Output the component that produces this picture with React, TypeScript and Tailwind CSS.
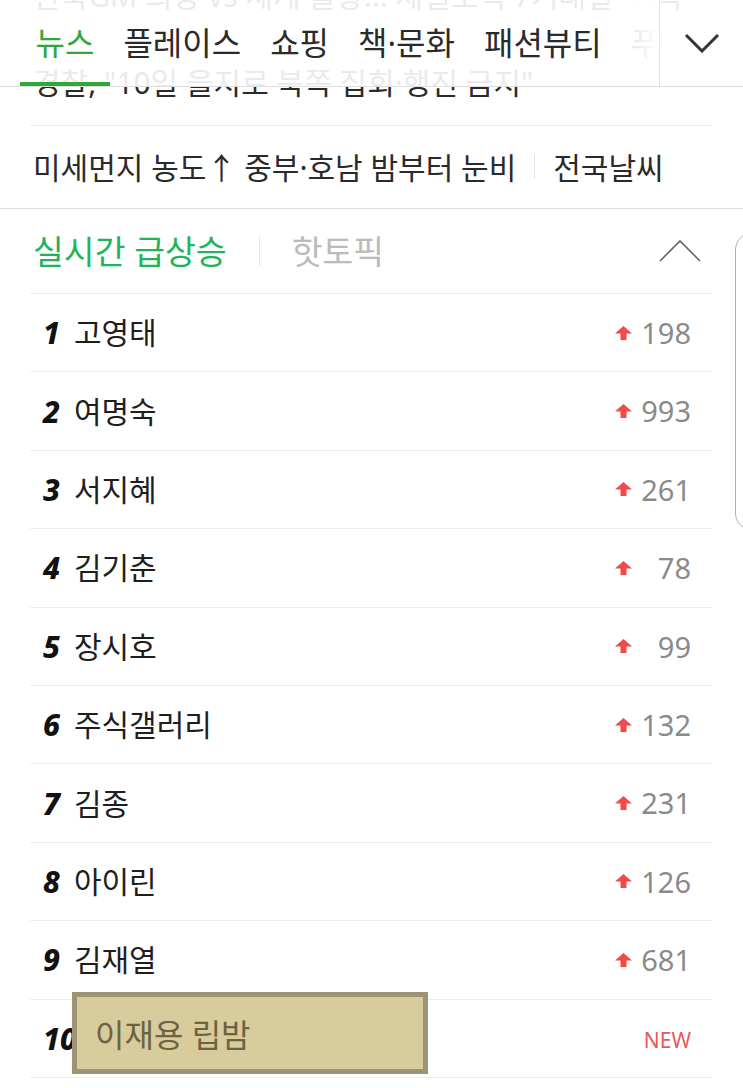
type TRank = {
  rank: number,
  name: string,
  change: string,
  isNew?: boolean
}

const ranks: TRank[] = [
  { rank: 1, name: '고영태', change: '198' },
  { rank: 2, name: '여명숙', change: '993' },
  { rank: 3, name: '서지혜', change: '261' },
  { rank: 4, name: '김기춘', change: '78' },
  { rank: 5, name: '장시호', change: '99' },
  { rank: 6, name: '주식갤러리', change: '132' },
  { rank: 7, name: '김종', change: '231' },
  { rank: 8, name: '아이린', change: '126' },
  { rank: 9, name: '김재열', change: '681' },
  { rank: 10, name: '이재용 립밤', change: '', isNew: true }
]

const tabs = ['뉴스', '플레이스', '쇼핑', '책·문화', '패션뷰티', '푸드']

const UpArrow = () => (
  <svg width="17" height="14" viewBox="0 0 17 14" className="shrink-0">
    <path d="M8.5 0 L17 7.5 H11.5 V14 H5.5 V7.5 H0 Z" fill="#f24a4a" />
  </svg>
)

const RankRow = ({ data }: { data: TRank }) => (
  <li className="h-[78.4px] flex items-center justify-between border-b border-[#eeeeee] pl-[13px] pr-[22px]">
    <div className="flex items-center gap-[14px]">
      <span className="text-[30px] font-extrabold italic text-[#111]">{data.rank}</span>
      <span className="text-[30px] text-[#1e1e1e]">{data.name}</span>
    </div>

    {data.isNew ? (
      <span className="text-[21px] text-[#e55b5b] mt-[5px]">NEW</span>
    ) : (
      <div className="flex items-center gap-[9px]">
        <UpArrow />
        <span className="w-[50px] text-right text-[29px] text-[#8a8a8a]">{data.change}</span>
      </div>
    )}
  </li>
)

const App = () => {
  return (
    <div className="relative w-[743px] h-[1088px] overflow-hidden bg-white font-['Noto_Sans','Noto_Sans_CJK_KR',sans-serif]">
      <section className="-mt-[48px] border-b border-[#dddddd]">
        <ul className="px-[30px] text-[30px] text-[#2a2a2a]">
          <li className="h-[87px] flex items-center border-b border-[#eeeeee] pl-[3px] whitespace-nowrap">
            한국GM 희망 vs 세계 불황... 제일모직 7거래일 '하락'
          </li>
          <li className="h-[87px] flex items-center border-b border-[#eeeeee] pl-[3px] whitespace-nowrap">
            경찰, "10일 을지로 북쪽 집회·행진 금지"
          </li>
          <li className="h-[82px] flex items-center pl-[3px] whitespace-nowrap">
            <span>미세먼지 농도↑ 중부·호남 밤부터 눈비</span>
            <span className="mx-[18px] w-px h-[24px] bg-[#e2e2e2]" />
            <span>전국날씨</span>
          </li>
        </ul>
      </section>

      <section className="px-[30px]">
        <div className="h-[85px] flex items-center justify-between border-b border-[#eeeeee] pl-[3px] pr-[12px]">
          <div className="flex items-center text-[33.5px]">
            <span className="text-[#1fb45a]">실시간 급상승</span>
            <span className="mx-[32px] w-px h-[30px] bg-[#e6e6e6]" />
            <span className="text-[#bbbbbb]">핫토픽</span>
          </div>
          <svg width="42" height="24" viewBox="0 0 42 24" fill="none">
            <polyline points="1,22 21,2 41,22" stroke="#666" strokeWidth="1.6" />
          </svg>
        </div>

        <ul>
          {ranks.map(item => <RankRow key={item.rank} data={item} />)}
        </ul>
      </section>

      <nav className="absolute top-0 left-0 w-full h-[87px] flex bg-white/90 border-b border-[#dddddd]">
        <div className="relative flex-1 overflow-hidden flex items-stretch pl-[21px]">
          {tabs.map((tab, i) => (
            <div
              key={tab}
              className={`relative shrink-0 flex items-center px-[14.5px] text-[32px] ${i === 0 ? 'text-[#2ea83a]' : 'text-[#2a2a2a]'}`}
            >
              {tab}
              {i === 0 && <span className="absolute -left-[1px] -right-[1px] bottom-0 h-[4px] bg-[#2ea83a]" />}
            </div>
          ))}
          <div className="absolute top-0 right-0 h-full w-[50px] bg-linear-to-r from-white/80 to-white" />
        </div>
        <div className="w-[84px] flex items-center justify-center border-l border-[#e4e4e4]">
          <svg width="36" height="20" viewBox="0 0 36 20" fill="none">
            <polyline points="2,2 18,18 34,2" stroke="#333" strokeWidth="3" />
          </svg>
        </div>
      </nav>

      <div className="absolute left-[735px] top-[232px] w-[40px] h-[299px] rounded-[18px] border border-[#b0b0b0]" />

      <div className="absolute left-[72px] top-[992px] w-[356px] h-[82px] flex items-center pl-[18px] bg-[#d8cc9d] border-[5px] border-[#9b9575]">
        <span className="text-[32px] text-[#6c6343] mt-[3px]">이재용 립밤</span>
      </div>
    </div>
  )
}

export default App
